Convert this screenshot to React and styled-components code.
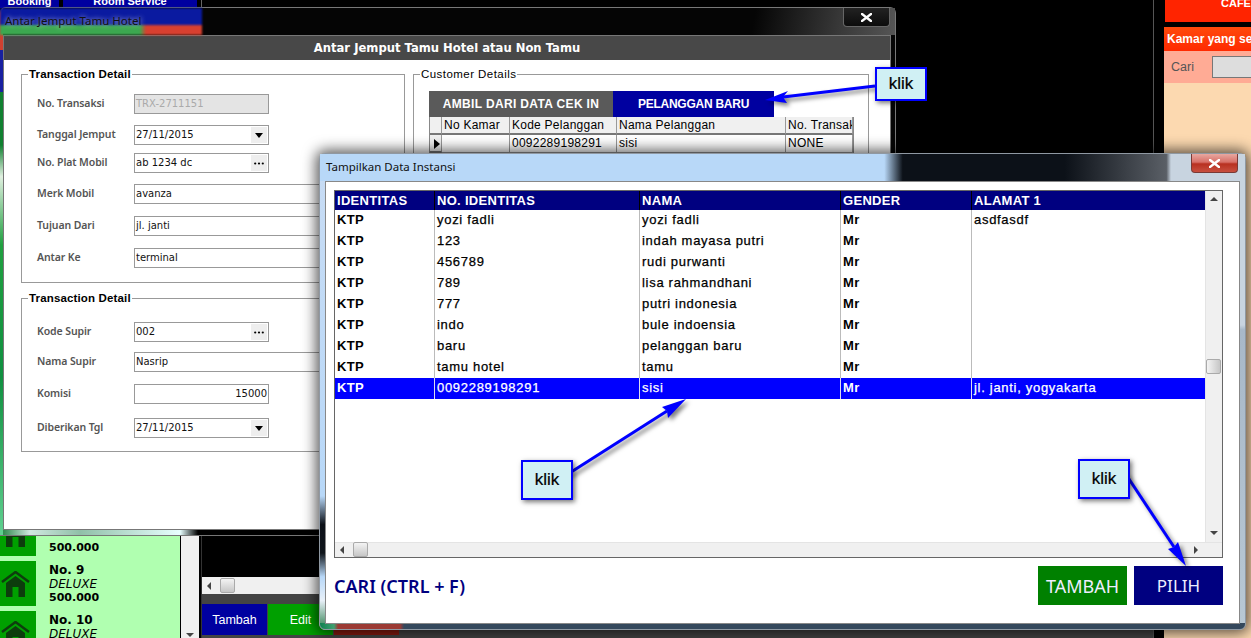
import React from 'react'
import styled, { createGlobalStyle } from 'styled-components'

const GlobalStyle = createGlobalStyle`
  html, body {
    margin: 0;
    padding: 0;
    background: #000;
  }
  * {
    box-sizing: border-box;
  }
`

const Desktop = styled.div`
  position: relative;
  width: 1251px;
  height: 638px;
  overflow: hidden;
  background: #000;
  font-family: 'Liberation Sans', Arial, sans-serif;
`

/* ---------- panes behind the dialogs ---------- */

const TopTabs = styled.div`
  position: absolute;
  left: 0;
  top: 0;
  width: 202px;
  height: 8px;
  display: flex;
  gap: 4px;
  overflow: hidden;
  border-right: 1px solid #666;
`

const TopTab = styled.div`
  width: ${({ $w }) => $w}px;
  height: 8px;
  background: #0000a0;
  color: #fff;
  font-size: 11px;
  font-weight: bold;
  line-height: 12px;
  text-align: center;
  span {
    display: block;
    margin-top: -5px;
  }
`

const RoomPane = styled.div`
  position: absolute;
  left: 0;
  top: 511px;
  width: 202px;
  height: 127px;
  display: flex;
  background: #000;
  border-right: 1px solid #333;
`

const RoomList = styled.div`
  width: 180px;
  background: #b0ffb0;
  display: flex;
  flex-direction: column;
  gap: 5px;
`

const RoomCard = styled.div`
  display: flex;
  height: 45px;
  flex-shrink: 0;
`

const RoomIcon = styled.div`
  width: 36px;
  background: #00a000;
  display: flex;
  align-items: center;
  padding-left: 1px;
  margin-right: 13px;
`

const RoomText = styled.div`
  font-family: 'DejaVu Sans', sans-serif;
  font-size: 12px;
  line-height: 13.5px;
  color: #000;
  padding-top: 3px;
  b {
    display: block;
  }
  i {
    display: block;
  }
  b + i + b {
    font-size: 11px;
  }
`

const RoomScroll = styled.div`
  position: relative;
  width: 18px;
  margin-left: 1px;
  background: #f0f0f0;
`

const BottomPane = styled.div`
  position: absolute;
  left: 202px;
  top: 577px;
  width: 951px;
  height: 61px;
  background: #444;
`

const PaneScroll = styled.div`
  position: relative;
  height: 17px;
  background: #f0f0f0;
`

const ActionRow = styled.div`
  display: flex;
  gap: 1px;
  margin-top: 10px;
`

const ActionButton = styled.div`
  width: 65px;
  height: 31px;
  background: ${({ $bg }) => $bg};
  color: #fff;
  font-size: 12.5px;
  display: flex;
  align-items: center;
  justify-content: center;
`

const RightPane = styled.div`
  position: absolute;
  left: 1153px;
  top: 0;
  width: 98px;
  height: 638px;
  border-left: 1px solid #555;
  display: flex;
  flex-direction: column;
  padding-left: 10px;
`

const CafeBar = styled.div`
  height: 22px;
  margin-left: 1px;
  background: #ff2400;
  color: #fff;
  font-size: 11px;
  font-weight: bold;
  line-height: 13px;
  padding-left: 56px;
  overflow: hidden;
  white-space: nowrap;
  span {
    display: block;
    margin-top: -3px;
  }
`

const RoomHead = styled.div`
  height: 24px;
  margin-top: 5px;
  background: linear-gradient(180deg, #ff4a0c, #ff2a00);
  color: #fff;
  font-size: 12px;
  font-weight: bold;
  line-height: 24px;
  padding-left: 3px;
  white-space: nowrap;
  overflow: hidden;
`

const SearchRow = styled.div`
  height: 32px;
  background: #ffab95;
  display: flex;
  align-items: center;
  padding-left: 7px;
  color: #555;
  font-size: 12.5px;
`

const SearchBox = styled.div`
  width: 60px;
  height: 22px;
  margin-left: 18px;
  flex-shrink: 0;
  background: #ddd;
  border: 1px solid #777;
`

const PeachArea = styled.div`
  flex: 1;
  background: #fcd9b0;
`

/* ---------- back dialog ---------- */

const BackWindow = styled.div`
  position: absolute;
  left: 0;
  top: 7px;
  width: 896px;
  height: 529px;
  display: flex;
  flex-direction: column;
  border: 1px solid #777;
  border-left: 0;
  border-radius: 6px 6px 0 0;
  background:
    linear-gradient(180deg, #d04030 0 8%, #1820a0 8% 16%, #108030 16% 26%, #e0f0e0 32%, #20a040 45%, #109040 70%, #60d090 100%) 0 0 / 3px 100% no-repeat,
    linear-gradient(90deg, #208040 0, #d0e8e0 30px, #90c0a8 80px, #e8ffff 180px, #000 198px) 0 100% / 100% 6px no-repeat,
    #050505;
`

const BackTitleBar = styled.div`
  position: relative;
  height: 27px;
  background: linear-gradient(100deg, transparent 84%, #3a3a3a 94%, #555 100%);
`

const TitleGlow = styled.div`
  position: absolute;
  left: 0;
  top: 0;
  width: 202px;
  height: 27px;
  background:
    linear-gradient(180deg, #0a1aa0 0 62%, transparent 62%),
    linear-gradient(90deg, #3ca850 0 140px, #d84030 146px);
  filter: blur(1px);
`

const TitleText = styled.div`
  position: relative;
  height: 27px;
  padding-left: ${({ $left }) => $left}px;
  padding-bottom: ${({ $lift }) => $lift}px;
  display: flex;
  align-items: center;
  font-family: 'Noto Sans', sans-serif;
  font-size: 11.5px;
  color: #111;
  text-shadow: ${({ $glow }) => ($glow ? '0 0 5px rgba(255, 255, 255, 0.85)' : 'none')};
`

const CloseButton = styled.div`
  position: absolute;
  right: ${({ $right }) => $right}px;
  top: 0;
  width: 47px;
  height: 19px;
  border: 1px solid ${({ $danger }) => ($danger ? '#7a3a36' : '#666')};
  border-top: 0;
  border-radius: 0 0 4px 4px;
  display: flex;
  align-items: center;
  justify-content: center;
  background: ${({ $danger }) =>
    $danger
      ? 'linear-gradient(180deg, #e8a8a0 0, #d87068 45%, #b83020 55%, #c85040 100%)'
      : 'linear-gradient(180deg, #222, #0c0c0c)'};
`

const BackInner = styled.div`
  flex: 1;
  margin: 0 4px 5px 3px;
  border: 1px solid #777;
  background: #fff;
  display: flex;
  flex-direction: column;
`

const DialogHead = styled.div`
  height: 24px;
  background: #484848;
  color: #fff;
  font-family: 'DejaVu Sans', sans-serif;
  font-size: 11.6px;
  font-weight: bold;
  display: flex;
  align-items: center;
  justify-content: center;
`

const DialogBody = styled.div`
  display: flex;
  gap: 8px;
  padding: 14px 0 0 17px;
`

const Column = styled.div`
  width: ${({ $w }) => $w}px;
`

const Group = styled.div`
  position: relative;
  height: ${({ $h }) => $h}px;
  margin-top: ${({ $top }) => $top || 0}px;
  padding-top: ${({ $pad }) => $pad}px;
  padding-left: ${({ $left }) => $left}px;
  border: 1px solid #999;
`

const Legend = styled.div`
  position: absolute;
  left: 6px;
  top: -7px;
  padding: 0 1px;
  background: #fff;
  color: #000;
  font-size: 11.5px;
  font-weight: ${({ $bold }) => ($bold ? 'bold' : 'normal')};
  letter-spacing: ${({ $bold }) => ($bold ? '0.15px' : '0.45px')};
  line-height: 13px;
`

const FormRow = styled.div`
  display: flex;
  align-items: center;
  height: 20px;
  margin-top: ${({ $top }) => $top || 0}px;
`

const FieldLabel = styled.div`
  width: 97px;
  margin-top: -2px;
  font-family: 'Noto Sans', sans-serif;
  font-size: 10.5px;
  font-weight: 600;
  letter-spacing: -0.1px;
  color: #555;
`

const Field = styled.div`
  width: ${({ $wide }) => ($wide ? 261 : 135)}px;
  height: 20px;
  border: 1px solid #999;
  background: ${({ $disabled }) => ($disabled ? '#e4e4e4' : '#fff')};
  color: ${({ $disabled }) => ($disabled ? '#aaa' : '#111')};
  font-family: 'DejaVu Sans', sans-serif;
  font-size: 10px;
  line-height: 18px;
  padding: 0 1px;
  display: flex;
  justify-content: ${({ $right }) => ($right ? 'flex-end' : 'space-between')};
`

const FieldButton = styled.div`
  width: 16px;
  height: 16px;
  margin: 1px 0;
  background: #eee;
  display: flex;
  align-items: center;
  justify-content: center;
`

const Caret = styled.div`
  width: 0;
  height: 0;
  border-left: 4.5px solid transparent;
  border-right: 4.5px solid transparent;
  border-top: 5px solid #000;
`

const SourceTabs = styled.div`
  display: flex;
  height: 26px;
`

const SourceTab = styled.div`
  width: ${({ $w }) => $w}px;
  background: ${({ $bg }) => $bg};
  color: #fff;
  font-size: 12px;
  font-weight: bold;
  letter-spacing: ${({ $sp }) => $sp}px;
  display: flex;
  align-items: center;
  justify-content: center;
`

const MiniGrid = styled.div`
  width: 425px;
  border: 1px solid #888;
  border-top: 0;
`

const MiniRow = styled.div`
  display: grid;
  grid-template-columns: 12px 68px 107px 169px 67px;
  height: 18px;
`

const MiniCell = styled.div`
  background: ${({ $head }) => ($head ? '#f0f0f0' : '#fff')};
  border-right: 1px solid #999;
  border-bottom: ${({ $head }) => ($head ? '2px solid #777' : '1px solid #999')};
  font-size: 12px;
  letter-spacing: 0.25px;
  line-height: 16px;
  padding-left: 2px;
  color: #000;
  white-space: nowrap;
  overflow: hidden;
`

const RowPointer = styled.div`
  margin: 4px 0 0 2px;
  width: 0;
  height: 0;
  border-top: 5px solid transparent;
  border-bottom: 5px solid transparent;
  border-left: 6px solid #000;
`

/* ---------- front dialog ---------- */

const FrontWindow = styled.div`
  position: absolute;
  left: 319px;
  top: 153px;
  width: 927px;
  height: 477px;
  display: flex;
  flex-direction: column;
  border-radius: 6px;
  box-shadow: 0 0 14px 3px rgba(0, 0, 0, 0.65);
  background:
    linear-gradient(90deg, #108050 0, #40a070 14px, #9c3a34 18px, #9c3a34 80px, #34485c 84px) 0 100% / 100% 6px no-repeat,
    linear-gradient(180deg, #c8dcf4 0, #b8d8f8 72%, #0c1018 78%, #10161c 84%, #b8d8f8 89%, #e8f0f8 94%, #308050 100%) 0 0 / 6px 100% no-repeat,
    linear-gradient(180deg, #c8d4e0 0, #c8d4e0 36%, #a8b8c8 37%, #b8c8d4 100%) 100% 0 / 6px 100% no-repeat,
    #fff;
  border: 1px solid #8f98a2;
`

const FrontTitleBar = styled.div`
  position: relative;
  height: 27px;
  background: linear-gradient(90deg, #b8d8f8 0, #b8d8f8 61%, #0c1118 63%, #0c1118 80.5%, #5a5f66 91.5%, #c8d4e0 92%);
`

const FrontInner = styled.div`
  flex: 1;
  margin: 0 5px 5px 5px;
  border: 1px solid #888;
  background: #fff;
  padding: 8px 16px 0 8px;
`

const GridBox = styled.div`
  height: 368px;
  border: 1px solid #666;
  display: flex;
  flex-direction: column;
`

const GridMain = styled.div`
  flex: 1;
  display: flex;
  min-height: 0;
`

const GridTable = styled.div`
  width: 870px;
`

const GridRow = styled.div`
  display: grid;
  grid-template-columns: 100px 205px 201px 131px 233px;
  height: ${({ $head }) => ($head ? 19 : 21)}px;
  background: ${({ $head, $active }) => ($head ? '#000080' : $active ? '#0000ff' : 'transparent')};
  color: ${({ $head, $active }) => ($head || $active ? '#fff' : '#000')};
`

const GridCell = styled.div`
  border-right: 1px solid ${({ $line }) => $line};
  padding-left: 2px;
  font-size: 13px;
  letter-spacing: ${({ $strong }) => ($strong ? '0.3px' : '0.7px')};
  font-weight: ${({ $strong }) => ($strong ? 'bold' : 'normal')};
  -webkit-text-stroke: ${({ $strong }) => ($strong ? '0' : '0.25px')};
  line-height: ${({ $head }) => ($head ? 19 : 20)}px;
  white-space: nowrap;
  overflow: hidden;
  &:last-child {
    border-right: 0;
  }
`

const VScroll = styled.div`
  position: relative;
  width: 17px;
  background: #f0f0f0;
  border-left: 1px solid #e4e4e4;
`

const HScroll = styled.div`
  position: relative;
  height: 15px;
  background: #f0f0f0;
  border-top: 1px solid #e4e4e4;
`

const Thumb = styled.div`
  position: absolute;
  left: ${({ $x }) => $x}px;
  top: ${({ $y }) => $y}px;
  width: ${({ $w }) => $w}px;
  height: ${({ $h }) => $h}px;
  border: 1px solid #aaa;
  border-radius: 2px;
  background: ${({ $side }) =>
    $side
      ? 'linear-gradient(90deg, #f4f4f4, #c6c6c6)'
      : 'linear-gradient(180deg, #f4f4f4, #c6c6c6)'};
`

const Arrow = styled.div`
  position: absolute;
  left: ${({ $x }) => $x}px;
  top: ${({ $y }) => $y}px;
  width: 0;
  height: 0;
  ${({ $dir }) =>
    $dir === 'up' &&
    'border-left: 4px solid transparent; border-right: 4px solid transparent; border-bottom: 4px solid #444;'}
  ${({ $dir }) =>
    $dir === 'down' &&
    'border-left: 4px solid transparent; border-right: 4px solid transparent; border-top: 4px solid #444;'}
  ${({ $dir }) =>
    $dir === 'left' &&
    'border-top: 4px solid transparent; border-bottom: 4px solid transparent; border-right: 4px solid #444;'}
  ${({ $dir }) =>
    $dir === 'right' &&
    'border-top: 4px solid transparent; border-bottom: 4px solid transparent; border-left: 4px solid #444;'}
`

const Footer = styled.div`
  display: flex;
  align-items: center;
  justify-content: space-between;
  height: 39px;
  margin-top: 8px;
`

const SearchHint = styled.div`
  font-family: 'Noto Sans', sans-serif;
  font-size: 18px;
  font-weight: 600;
  color: #000080;
`

const FooterButtons = styled.div`
  display: flex;
  gap: 7px;
`

const FooterButton = styled.div`
  width: 89px;
  height: 39px;
  background: ${({ $bg }) => $bg};
  color: #eef;
  font-family: 'Noto Sans', sans-serif;
  font-size: ${({ $size }) => $size}px;
  display: flex;
  align-items: center;
  justify-content: center;
`

/* ---------- annotations ---------- */

const ArrowLayer = styled.svg`
  position: absolute;
  left: 0;
  top: 0;
  pointer-events: none;
  filter: drop-shadow(3px 3px 2px rgba(0, 0, 0, 0.5));
`

const Callout = styled.div`
  position: absolute;
  left: ${({ $x }) => $x}px;
  top: ${({ $y }) => $y}px;
  width: ${({ $w }) => $w}px;
  height: ${({ $h }) => $h}px;
  border: 2px solid #0000ff;
  background: #d0f0f4;
  box-shadow: 2px 2px 5px rgba(0, 0, 0, 0.55);
  color: #000;
  font-size: 17px;
  -webkit-text-stroke: 0.2px #000;
  display: flex;
  align-items: center;
  justify-content: center;
`

const rooms = [
  { id: 8, no: '\u00a0', type: '\u00a0', price: '500.000' },
  { id: 9, no: 'No. 9', type: 'DELUXE', price: '500.000' },
  { id: 10, no: 'No. 10', type: 'DELUXE', price: '500.000' },
]

const columns = ['IDENTITAS', 'NO. IDENTITAS', 'NAMA', 'GENDER', 'ALAMAT 1']

const people = [
  ['KTP', 'yozi fadli', 'yozi fadli', 'Mr', 'asdfasdf'],
  ['KTP', '123', 'indah mayasa putri', 'Mr', ''],
  ['KTP', '456789', 'rudi purwanti', 'Mr', ''],
  ['KTP', '789', 'lisa rahmandhani', 'Mr', ''],
  ['KTP', '777', 'putri indonesia', 'Mr', ''],
  ['KTP', 'indo', 'bule indoensia', 'Mr', ''],
  ['KTP', 'baru', 'pelanggan baru', 'Mr', ''],
  ['KTP', 'tamu hotel', 'tamu', 'Mr', ''],
  ['KTP', '0092289198291', 'sisi', 'Mr', 'jl. janti, yogyakarta'],
]

const arrows = [
  { line: [875, 86, 783, 97], head: '765,100 788,91 783,97 787,103' },
  { line: [568, 474, 667, 411], head: '686,399 662,407 667,411 668,418' },
  { line: [1125, 473, 1174, 547], head: '1186,566 1168,549 1174,547 1178,542' },
]

const HouseIcon = () => (
  <svg width="29" height="26" viewBox="0 0 29 26">
    <path d="M1 11 14.5 1 28 11" fill="none" stroke="#0d3d0d" strokeWidth="2.5" />
    <path
      fillRule="evenodd"
      fill="#0d3d0d"
      d="M14.5 5 24 12v14H5V12zM11.5 16v10h6V16z"
    />
  </svg>
)

const Dots = () => (
  <svg width="10" height="3" viewBox="0 0 10 3">
    <circle cx="1.2" cy="1.5" r="1.1" fill="#000" />
    <circle cx="5" cy="1.5" r="1.1" fill="#000" />
    <circle cx="8.8" cy="1.5" r="1.1" fill="#000" />
  </svg>
)

const CloseGlyph = () => (
  <svg width="11" height="9" viewBox="0 0 11 9">
    <path
      d="M1 1 10 8M10 1 1 8"
      stroke="#fff"
      strokeWidth="2.4"
      strokeLinecap="square"
    />
  </svg>
)

const Row = ({ label, top, wide, disabled, right, button, children }) => (
  <FormRow $top={top}>
    <FieldLabel>{label}</FieldLabel>
    <Field $wide={wide} $disabled={disabled} $right={right}>
      {children}
      {button === 'date' && (
        <FieldButton>
          <Caret />
        </FieldButton>
      )}
      {button === 'lookup' && (
        <FieldButton>
          <Dots />
        </FieldButton>
      )}
    </Field>
  </FormRow>
)

const lineColor = active => (active ? '#dde' : '#bbb')

export default function App() {
  return (
    <Desktop>
      <GlobalStyle />

      <TopTabs>
        <TopTab $w={59}>
          <span>Booking</span>
        </TopTab>
        <TopTab $w={134}>
          <span>Room Service</span>
        </TopTab>
      </TopTabs>

      <RoomPane>
        <RoomList>
          {rooms.map(room => (
            <RoomCard key={room.id}>
              <RoomIcon>
                <HouseIcon />
              </RoomIcon>
              <RoomText>
                <b>{room.no}</b>
                <i>{room.type}</i>
                <b>{room.price}</b>
              </RoomText>
            </RoomCard>
          ))}
        </RoomList>
        <RoomScroll>
          <Arrow $dir="down" $x={5} $y={122} />
        </RoomScroll>
      </RoomPane>

      <BottomPane>
        <PaneScroll>
          <Arrow $dir="left" $x={5} $y={5} />
          <Thumb $x={18} $y={1} $w={15} $h={15} />
        </PaneScroll>
        <ActionRow>
          <ActionButton $bg="#0000a0">Tambah</ActionButton>
          <ActionButton $bg="#00a000">Edit</ActionButton>
          <ActionButton $bg="#8b1a10" />
        </ActionRow>
      </BottomPane>

      <RightPane>
        <CafeBar>
          <span>CAFE</span>
        </CafeBar>
        <RoomHead>Kamar yang se</RoomHead>
        <SearchRow>
          Cari
          <SearchBox />
        </SearchRow>
        <PeachArea />
      </RightPane>

      <BackWindow>
        <BackTitleBar>
          <TitleGlow />
          <TitleText $left={5} $lift={2} $glow>
            Antar Jemput Tamu Hotel
          </TitleText>
          <CloseButton $right={5}>
            <CloseGlyph />
          </CloseButton>
        </BackTitleBar>
        <BackInner>
          <DialogHead>Antar Jemput Tamu Hotel atau Non Tamu</DialogHead>
          <DialogBody>
            <Column $w={384}>
              <Group $h={209} $pad={19} $left={15}>
                <Legend $bold>Transaction Detail</Legend>
                <Row label="No. Transaksi" disabled>
                  TRX-2711151
                </Row>
                <Row label="Tanggal Jemput" top={11} button="date">
                  27/11/2015
                </Row>
                <Row label="No. Plat Mobil" top={8} button="lookup">
                  ab 1234 dc
                </Row>
                <Row label="Merk Mobil" top={11} wide>
                  avanza
                </Row>
                <Row label="Tujuan Dari" top={12} wide>
                  jl. janti
                </Row>
                <Row label="Antar Ke" top={12} wide>
                  terminal
                </Row>
              </Group>
              <Group $h={154} $top={15} $pad={23} $left={15}>
                <Legend $bold>Transaction Detail</Legend>
                <Row label="Kode Supir" button="lookup">
                  002
                </Row>
                <Row label="Nama Supir" top={10} wide>
                  Nasrip
                </Row>
                <Row label="Komisi" top={12} right>
                  15000
                </Row>
                <Row label="Diberikan Tgl" top={14} button="date">
                  27/11/2015
                </Row>
              </Group>
            </Column>
            <Column $w={456}>
              <Group $h={209} $pad={16} $left={15}>
                <Legend>Customer Details</Legend>
                <SourceTabs>
                  <SourceTab $w={184} $bg="#5a5a5a" $sp={0.35}>
                    AMBIL DARI DATA CEK IN
                  </SourceTab>
                  <SourceTab $w={161} $bg="#0000a0" $sp={-0.25}>
                    PELANGGAN BARU
                  </SourceTab>
                </SourceTabs>
                <MiniGrid>
                  <MiniRow>
                    <MiniCell $head />
                    <MiniCell $head>No Kamar</MiniCell>
                    <MiniCell $head>Kode Pelanggan</MiniCell>
                    <MiniCell $head>Nama Pelanggan</MiniCell>
                    <MiniCell $head>No. Transaksi</MiniCell>
                  </MiniRow>
                  <MiniRow>
                    <MiniCell $head>
                      <RowPointer />
                    </MiniCell>
                    <MiniCell />
                    <MiniCell>0092289198291</MiniCell>
                    <MiniCell>sisi</MiniCell>
                    <MiniCell>NONE</MiniCell>
                  </MiniRow>
                </MiniGrid>
              </Group>
            </Column>
          </DialogBody>
        </BackInner>
      </BackWindow>

      <FrontWindow>
        <FrontTitleBar>
          <TitleText $left={6} $lift={3}>
            Tampilkan Data Instansi
          </TitleText>
          <CloseButton $danger $right={7}>
            <CloseGlyph />
          </CloseButton>
        </FrontTitleBar>
        <FrontInner>
          <GridBox>
            <GridMain>
              <GridTable>
                <GridRow $head>
                  {columns.map(name => (
                    <GridCell key={name} $head $strong $line="#000">
                      {name}
                    </GridCell>
                  ))}
                </GridRow>
                {people.map((person, index) => {
                  const active = index === people.length - 1
                  return (
                    <GridRow key={person[1]} $active={active}>
                      {person.map((value, col) => (
                        <GridCell
                          key={col}
                          $strong={col === 0 || col === 3}
                          $line={lineColor(active)}
                        >
                          {value}
                        </GridCell>
                      ))}
                    </GridRow>
                  )
                })}
              </GridTable>
              <VScroll>
                <Arrow $dir="up" $x={4} $y={6} />
                <Thumb $side $x={0} $y={168} $w={15} $h={15} />
                <Arrow $dir="down" $x={4} $y={340} />
              </VScroll>
            </GridMain>
            <HScroll>
              <Arrow $dir="left" $x={5} $y={3} />
              <Thumb $x={18} $y={-1} $w={15} $h={15} />
              <Arrow $dir="right" $x={859} $y={3} />
            </HScroll>
          </GridBox>
          <Footer>
            <SearchHint>CARI (CTRL + F)</SearchHint>
            <FooterButtons>
              <FooterButton $bg="#008000" $size={18}>
                TAMBAH
              </FooterButton>
              <FooterButton $bg="#000080" $size={17}>
                PILIH
              </FooterButton>
            </FooterButtons>
          </Footer>
        </FrontInner>
      </FrontWindow>

      <ArrowLayer width="1251" height="638" viewBox="0 0 1251 638">
        {arrows.map(arrow => (
          <g key={arrow.head}>
            <line
              x1={arrow.line[0]}
              y1={arrow.line[1]}
              x2={arrow.line[2]}
              y2={arrow.line[3]}
              stroke="#0000ff"
              strokeWidth="3"
            />
            <polygon points={arrow.head} fill="#0000ff" />
          </g>
        ))}
      </ArrowLayer>

      <Callout $x={875} $y={67} $w={52} $h={34}>
        klik
      </Callout>
      <Callout $x={521} $y={460} $w={52} $h={40}>
        klik
      </Callout>
      <Callout $x={1078} $y={459} $w={52} $h={40}>
        klik
      </Callout>
    </Desktop>
  )
}
